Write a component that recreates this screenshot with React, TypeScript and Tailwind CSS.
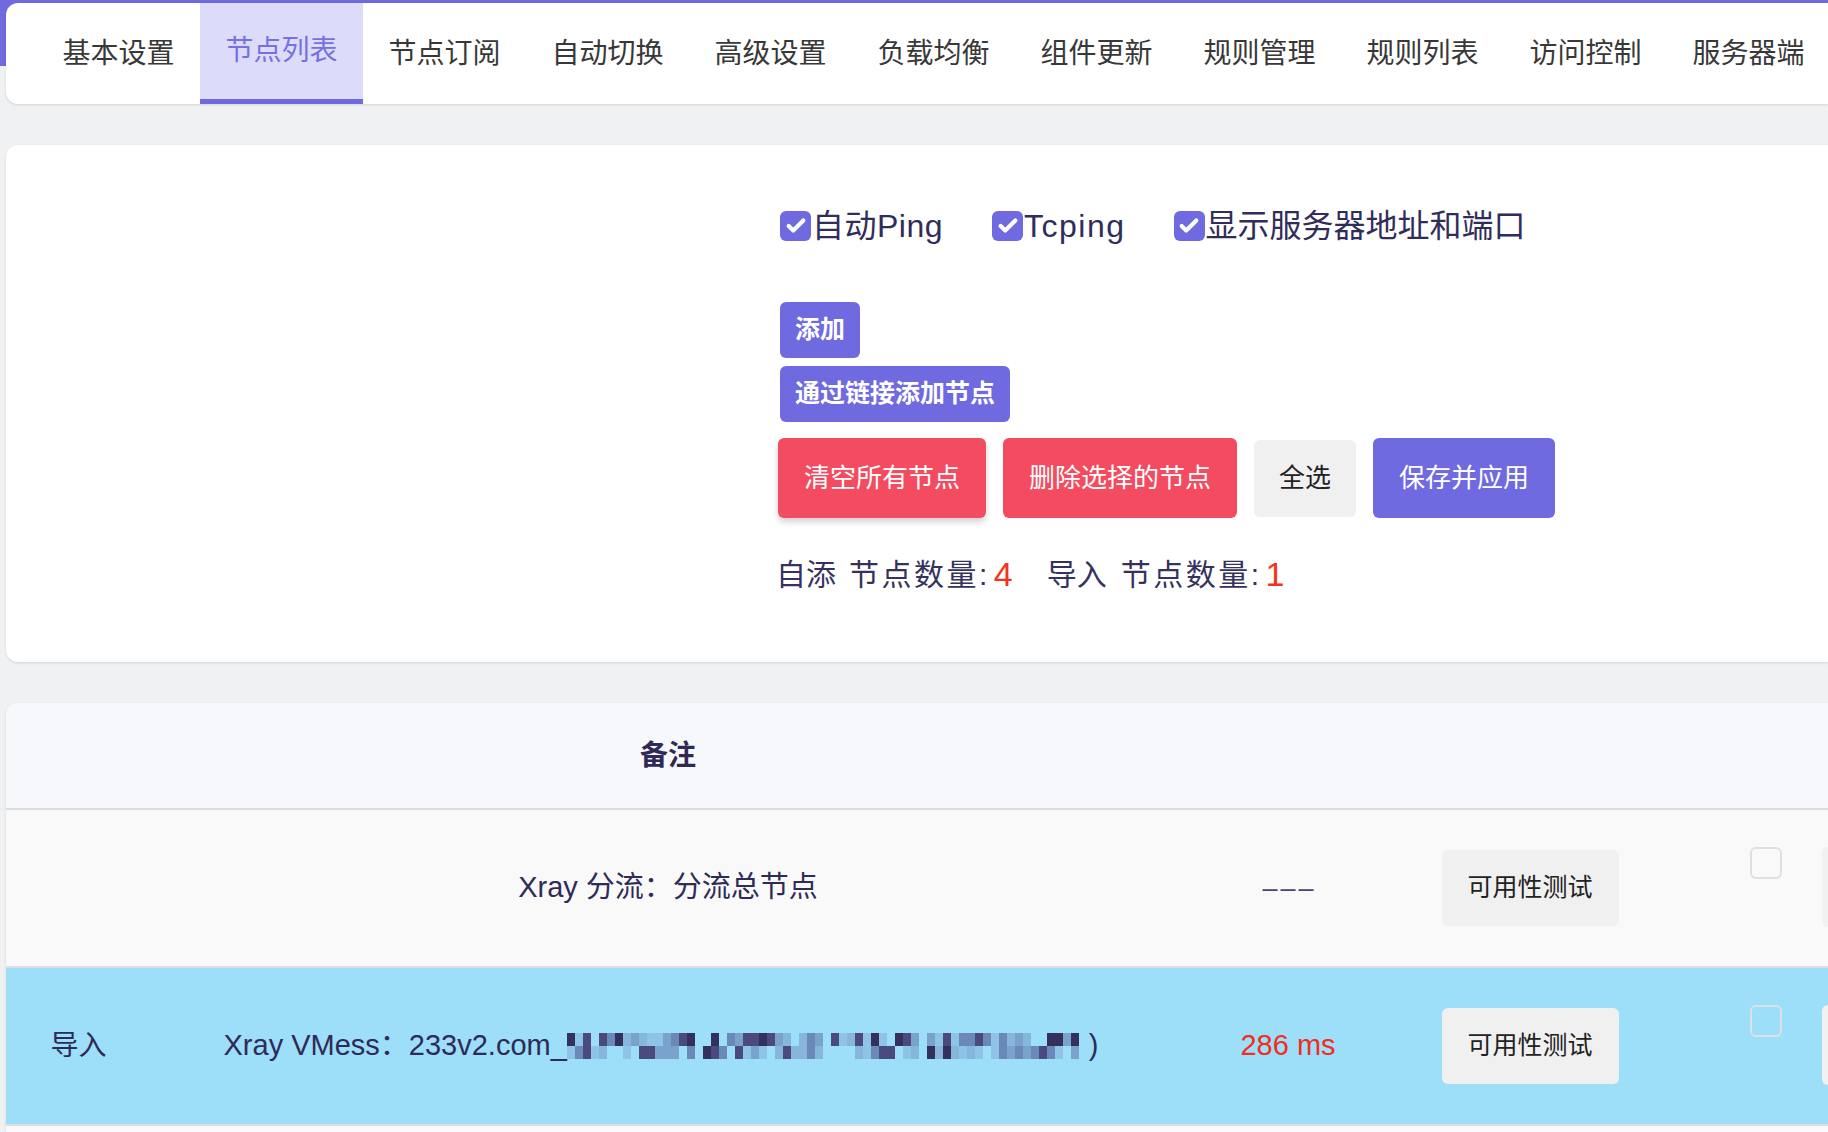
import { Check } from "lucide-react";

const tabs = [
  "基本设置",
  "节点列表",
  "节点订阅",
  "自动切换",
  "高级设置",
  "负载均衡",
  "组件更新",
  "规则管理",
  "规则列表",
  "访问控制",
  "服务器端",
];

const options = [
  { label: "自动Ping", cls: "tracking-[0.5px]", gap: "mr-[49px]" },
  { label: "Tcping", cls: "tracking-[1.5px]", gap: "mr-[48px]" },
  { label: "显示服务器地址和端口", cls: "", gap: "" },
];

// blurred part of the node name, drawn as a mosaic
function Mosaic() {
  const palette = ["#8ec4e8", "#86b6dc", "#7aa3cc", "#6a88b8", "#4a4a7e", "#33305e"];
  let seed = 11;
  const rand = () => {
    seed = (seed * 9301 + 49297) % 233280;
    return seed / 233280;
  };
  const cells = [];
  for (let r = 0; r < 2; r++) {
    for (let c = 0; c < 65; c++) {
      const v = rand();
      if (c > 2 && v < 0.25) continue;
      const color = palette[Math.floor(rand() * palette.length)];
      cells.push(<rect key={r + "-" + c} x={c * 8} y={r * 13} width={8} height={13} fill={color} />);
    }
  }
  return (
    <svg width={522} height={26} viewBox="0 0 522 26" className="shrink-0">
      {cells}
    </svg>
  );
}

function TickBox() {
  return (
    <span className="w-[31px] h-[30px] rounded-[6px] bg-[#6f6adf] flex items-center justify-center shrink-0">
      <Check size={22} strokeWidth={4.5} color="#fff" />
    </span>
  );
}

export default function App() {
  const font = { fontFamily: '"Liberation Sans", "Noto Sans CJK SC", sans-serif' };

  return (
    <div
      className="w-[1828px] h-[1132px] overflow-hidden bg-[linear-gradient(#6f6adf_0,#6f6adf_66px,#f0f1f3_66px)] pt-[3px] pl-[6px] flex flex-col"
      style={font}
    >
      {/* tabs */}
      <nav className="h-[101px] bg-white rounded-l-xl shadow-sm flex pl-[31px] shrink-0 overflow-hidden">
        {tabs.map((t, i) => (
          <div
            key={t}
            className={
              i === 1
                ? "w-[163px] shrink-0 flex items-center justify-center text-[28px] bg-[#dcdcfa] text-[#7670e0] border-b-[5px] border-[#6f6adf]"
                : "w-[163px] shrink-0 flex items-center justify-center text-[28px] text-[#383838]"
            }
          >
            {t}
          </div>
        ))}
      </nav>

      {/* settings */}
      <section className="mt-[41px] h-[517px] bg-white rounded-l-xl shadow-sm pl-[774px] pt-[61px] shrink-0">
        <div className="flex items-center h-[40px]">
          {options.map((o) => (
            <label key={o.label} className={"flex items-center text-[32px] text-[#312d5a] " + o.gap}>
              <TickBox />
              <span className={"ml-[1px] " + o.cls}>{o.label}</span>
            </label>
          ))}
        </div>

        <button className="mt-[56px] h-[56px] px-[15px] rounded-md bg-[#6f6adf] text-white text-[25px] font-bold block">
          添加
        </button>
        <button className="mt-[8px] h-[56px] px-[15px] rounded-md bg-[#6f6adf] text-white text-[25px] font-bold block">
          通过链接添加节点
        </button>

        <div className="mt-[16px] flex items-center gap-[17px] ml-[-2px]">
          <button className="h-[80px] px-[26px] rounded-md bg-[#f34b5f] text-white text-[26px] shadow-[0_4px_6px_rgba(0,0,0,0.18)]">
            清空所有节点
          </button>
          <button className="h-[80px] px-[26px] rounded-md bg-[#f34b5f] text-white text-[26px]">
            删除选择的节点
          </button>
          <button className="h-[77px] px-[25px] rounded-md bg-[#f0f0f0] text-[#222] text-[26px]">
            全选
          </button>
          <button className="h-[80px] px-[26px] rounded-md bg-[#6f6adf] text-white text-[26px]">
            保存并应用
          </button>
        </div>

        <p className="mt-[36px] h-[40px] flex items-center text-[30px] text-[#36325e] ml-[-4px] whitespace-pre">
          <span>自添</span>
          <span className="ml-[13px] tracking-[2.5px]">节点数量:</span>
          <span className="ml-[4px] text-[34px] text-[#f4331a]">4</span>
          <span className="ml-[34px]">导入</span>
          <span className="ml-[14px] tracking-[2.5px]">节点数量:</span>
          <span className="ml-[4px] text-[34px] text-[#f4331a]">1</span>
        </p>
      </section>

      {/* node table */}
      <section className="mt-[41px] flex-1 bg-[#f9f9f9] rounded-tl-xl shadow-sm overflow-hidden">
        <div className="h-[107px] bg-[#f7f8fc] border-b-2 border-[#dcdcdc] grid grid-cols-[145px_1034px_206px_278px_153px_120px]">
          <div />
          <div className="flex items-center justify-center text-[28px] font-bold text-[#2e2a55]">备注</div>
        </div>

        <div className="h-[158px] border-b-2 border-[#dedede] bg-[#f9f9f9] grid grid-cols-[145px_1034px_206px_278px_153px_120px] text-[29px] text-[#2f2b58]">
          <div />
          <div className="flex items-center justify-center">Xray 分流：分流总节点</div>
          <div className="flex items-center justify-center text-[#4a4570] text-[27px] tracking-[3px] pl-[3px]">–––</div>
          <div className="flex items-center justify-center">
            <button className="w-[177px] h-[76px] rounded-md bg-[#f0f0f0] text-[25px] text-[#222]">可用性测试</button>
          </div>
          <div className="pt-[37px] pl-[81px]">
            <span className="block w-[32px] h-[32px] rounded-md border-2 border-[#dde0e5]" />
          </div>
          <div className="pt-[37px]">
            <button aria-label="修改" className="w-[110px] h-[80px] rounded-md bg-[#f1f1f1]" />
          </div>
        </div>

        <div className="h-[158px] border-b-2 border-[#dedede] bg-[#9ddef9] grid grid-cols-[145px_1034px_206px_278px_153px_120px] text-[29px] text-[#2f2b58]">
          <div className="flex items-center justify-center text-[28px]">导入</div>
          <div className="flex items-center justify-center pr-[14px]">
            <span className="whitespace-pre">Xray VMess：233v2.com_</span>
            <Mosaic />
            <span>)</span>
          </div>
          <div className="flex items-center justify-center text-[#f22d1e]">286 ms</div>
          <div className="flex items-center justify-center">
            <button className="w-[177px] h-[76px] rounded-md bg-[#f0f0f0] text-[25px] text-[#222]">可用性测试</button>
          </div>
          <div className="pt-[37px] pl-[81px]">
            <span className="block w-[32px] h-[32px] rounded-md border-2 border-[#dde0e5]" />
          </div>
          <div className="pt-[37px]">
            <button aria-label="修改" className="w-[110px] h-[80px] rounded-md bg-[#f1f1f1]" />
          </div>
        </div>
      </section>
    </div>
  );
}
